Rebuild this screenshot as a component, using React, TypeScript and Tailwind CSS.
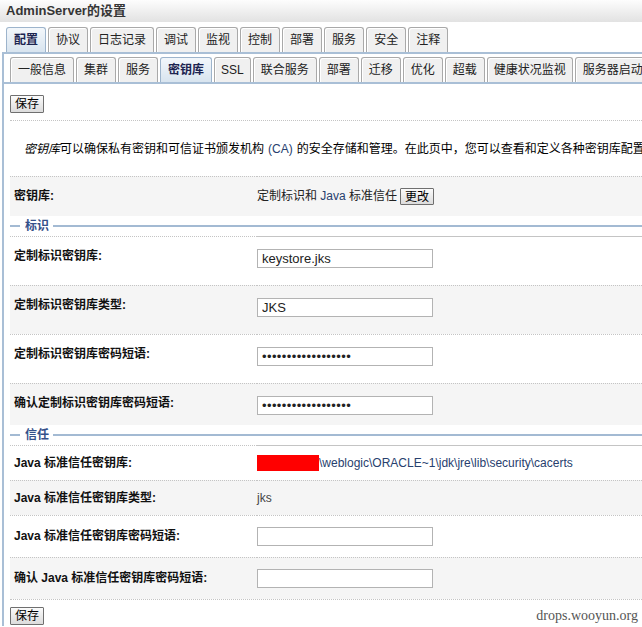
import type { ReactNode } from "react";

const topTabs = ["配置", "协议", "日志记录", "调试", "监视", "控制", "部署", "服务", "安全", "注释"];
const subTabs = [
  "一般信息",
  "集群",
  "服务",
  "密钥库",
  "SSL",
  "联合服务",
  "部署",
  "迁移",
  "优化",
  "超载",
  "健康状况监视",
  "服务器启动",
];

function Tab({ label, active, tight }: { label: string; active?: boolean; tight?: boolean }) {
  const look = active
    ? "border-[#9db4cc] bg-linear-to-b from-[#f3f7fb] to-[#d8e4ef] font-bold text-[#1c2450]"
    : "border-[#a9a9a9] bg-[#f0f0f0] text-[#222] shadow-[inset_1px_1px_0_#fff]";
  return (
    <div
      className={`h-[25px] shrink-0 ${tight ? "px-[6px]" : "px-[7px]"} flex items-center rounded-t-[3px] border border-b-0 whitespace-nowrap ${look}`}
    >
      {label}
    </div>
  );
}

function Btn({ children, tall }: { children: ReactNode; tall?: boolean }) {
  return (
    <button
      className={`${tall ? "h-[18px]" : "h-[17px]"} px-[4px] border border-[#6f6f6f] bg-linear-to-b from-[#fbfbfb] to-[#dcdcdc] text-[12px] leading-none text-black rounded-[1px]`}
    >
      {children}
    </button>
  );
}

function Field({ value = "", password }: { value?: string; password?: boolean }) {
  return (
    <input
      readOnly
      type={password ? "password" : "text"}
      defaultValue={value}
      className={`w-[176px] h-[19px] border border-[#b3b3b3] px-[4px] text-[13px] text-[#222] bg-white outline-none ${password ? "tracking-[0.4px]" : ""}`}
    />
  );
}

function Section({ title }: { title: string }) {
  return (
    <div className="h-[20px] flex items-center">
      <div className="w-[10px] h-[2px] bg-[#a3bad3]" />
      <span className="ml-[5px] mr-[4px] font-bold text-[#34508a] leading-none">{title}</span>
      <div className="flex-1 h-[2px] bg-[#a3bad3]" />
    </div>
  );
}

// one label / value line of the settings table
function Row({
  label,
  children,
  gray,
  first,
  height,
  top,
}: {
  label: ReactNode;
  children?: ReactNode;
  gray?: boolean;
  first?: boolean;
  height: string;
  top?: boolean;
}) {
  const align = top ? "items-start pt-[12px]" : "items-center";
  return (
    <div className={`flex ${height} ${gray ? "bg-[#f5f5f5]" : ""}`}>
      <div
        className={`w-[247px] shrink-0 pl-[4px] flex ${align} border-t border-dotted border-[#c4c4c4] font-bold text-[#111] leading-[15px]`}
      >
        {label}
      </div>
      <div
        className={`flex-1 flex ${align} border-t ${first ? "border-solid" : "border-dotted"} border-[#c4c4c4] leading-[15px]`}
      >
        {children}
      </div>
    </div>
  );
}

export default function App() {
  return (
    <div className="w-[642px] h-[627px] overflow-hidden bg-white text-[12px] text-[#222] font-['Liberation_Sans','Noto_Sans_CJK_SC',sans-serif]">
      {/* Title */}
      <div className="h-[22px] pl-[6px] flex items-center bg-linear-to-b from-[#fdfdfd] to-[#e2e2e2] text-[13px] font-bold text-[#353535] whitespace-nowrap">
        AdminServer的设置
      </div>

      {/* Top tabs */}
      <div className="mt-[5px] pl-[6px] flex gap-[2px]">
        {topTabs.map((t, i) => (
          <Tab key={t + i} label={t} active={i === 0} />
        ))}
      </div>

      <div className="ml-[2px] border-t-2 border-l-2 border-[#a9bfd6]">
        {/* Sub tabs */}
        <div className="pt-[3px] pl-[6px] flex gap-[2px] border-b-2 border-[#a9bfd6] overflow-hidden">
          {subTabs.map((t, i) => (
            <Tab key={t + i} label={t} active={i === 3} tight={t === "SSL" || t.length > 5} />
          ))}
        </div>

        <div className="pl-[6px]">
          <div className="mt-[11px]">
            <Btn tall>保存</Btn>
          </div>

          {/* Description */}
          <div className="mt-[7px] h-[56px] pl-[14px] flex items-center border-t border-dotted border-[#c4c4c4] whitespace-nowrap overflow-hidden text-black">
            <i>密钥库</i>
            <span>可以确保私有密钥和可信证书颁发机构</span>
            <span className="mx-[4px] text-[#27406e]">(CA)</span>
            <span>的安全存储和管理。在此页中，您可以查看和定义各种密钥库配置。这些配置有助于您管理消息传输的安全性。</span>
          </div>

          <Row label="密钥库:" gray height="h-[40px]">
            <span className="whitespace-nowrap">
              定制标识和 <span className="text-[#27406e]">Java</span> 标准信任
            </span>
            <span className="ml-[3px]">
              <Btn>更改</Btn>
            </span>
          </Row>

          <Section title="标识" />
          <Row label="定制标识密钥库:" first top height="h-[49px]">
            <Field value="keystore.jks" />
          </Row>
          <Row label="定制标识密钥库类型:" gray top height="h-[49px]">
            <Field value="JKS" />
          </Row>
          <Row label="定制标识密钥库密码短语:" top height="h-[49px]">
            <Field value="passwordpassword12" password />
          </Row>
          <Row label="确认定制标识密钥库密码短语:" gray top height="h-[42px]">
            <Field value="passwordpassword12" password />
          </Row>

          <Section title="信任" />
          <Row label="Java 标准信任密钥库:" first height="h-[35px]">
            <div className="w-[62px] h-[16px] bg-[#ff0000] shrink-0" />
            <span className="whitespace-nowrap text-[#27406e]">
              \weblogic\ORACLE~1\jdk\jre\lib\security\cacerts
            </span>
          </Row>
          <Row label="Java 标准信任密钥库类型:" gray height="h-[35px]">
            <span className="text-[#444]">jks</span>
          </Row>
          <Row label="Java 标准信任密钥库密码短语:" height="h-[42px]">
            <Field />
          </Row>
          <Row label="确认 Java 标准信任密钥库密码短语:" gray height="h-[42px]">
            <Field />
          </Row>
          <div className="border-t border-dotted border-[#c4c4c4]" />

          {/* Footer */}
          <div className="mt-[5px] flex items-center justify-between pr-[4px]">
            <Btn tall>保存</Btn>
            <span className="font-['Liberation_Serif',serif] text-[14px] text-[#555]">drops.wooyun.org</span>
          </div>
        </div>
      </div>
    </div>
  );
}
